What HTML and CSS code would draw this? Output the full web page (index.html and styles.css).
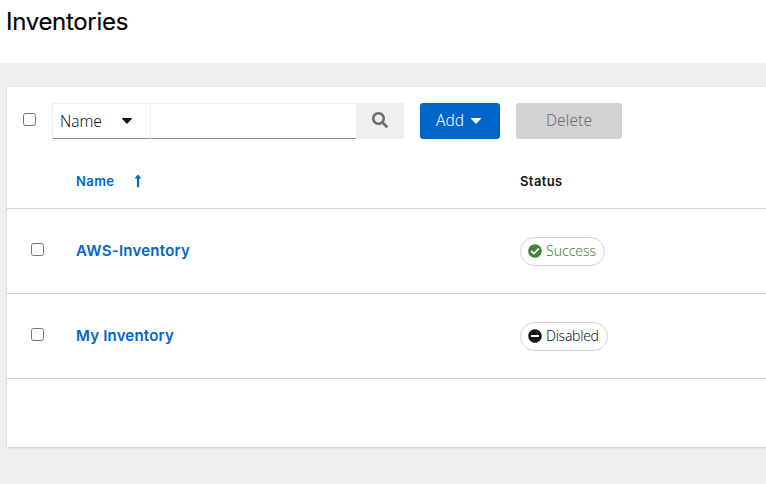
FILE: index.html
```
<!DOCTYPE html>
<html lang="en">
<head>
<meta charset="utf-8">
<title>Inventories</title>
<link rel="stylesheet" href="styles.css">
</head>
<body>
<header class="page-header"><h1>Inventories</h1></header>
<main class="card">
  <div class="toolbar">
    <input class="check" type="checkbox" aria-label="Select all">
    <div class="search">
      <button class="filter"><span class="filter-label">Name</span><svg class="caret" viewBox="0 0 10 6"><path d="M.7 0h8.6c.6 0 .9.7.5 1.1L5.5 5.5a.7.7 0 0 1-1 0L.2 1.1C-.2.7.1 0 .7 0z"/></svg></button>
      <input class="query" type="text" aria-label="Search">
      <button class="go" aria-label="Submit search"><svg viewBox="0 0 512 512"><path d="M505 442.7L405.300 343c-4.500-4.500-10.600-7-17-7H372c27.600-35.300 44-79.700 44-128C416 93.100 322.900 0 208 0S0 93.100 0 208s93.100 208 208 208c48.300 0 92.700-16.400 128-44v16.300c0 6.400 2.500 12.500 7 17l99.700 99.700c9.400 9.400 24.600 9.400 33.900 0l28.300-28.300c9.400-9.400 9.400-24.600.1-34zM208 336c-70.700 0-128-57.200-128-128 0-70.700 57.200-128 128-128 70.700 0 128 57.200 128 128 0 70.700-57.200 128-128 128z"/></svg></button>
    </div>
    <button class="btn add"><span class="add-label">Add</span><svg class="caret" viewBox="0 0 10 6"><path d="M.7 0h8.6c.6 0 .9.7.5 1.100L5.500 5.500a.7.7 0 0 1-1 0L.2 1.100C-.2.7.1 0 .7 0z"/></svg></button>
    <button class="btn delete" disabled><span class="delete-label">Delete</span></button>
  </div>
  <div class="row head">
    <span></span>
    <span class="sort"><span class="sort-label">Name</span><svg viewBox="0 0 256 512"><path d="M88 166.059V468c0 6.627 5.373 12 12 12h56c6.627 0 12-5.373 12-12V166.059h46.059c21.382 0 32.090-25.851 16.971-40.971l-86.059-86.059c-9.373-9.373-24.569-9.373-33.941 0l-86.059 86.059c-15.119 15.119-4.411 40.971 16.971 40.971H88z"/></svg></span>
    <span class="status-title">Status</span>
  </div>
  <div class="row">
    <input class="check" type="checkbox" aria-label="Select AWS-Inventory">
    <a class="name aws">AWS-Inventory</a>
    <span class="pill success"><svg viewBox="0 0 512 512"><path d="M504 256c0 136.967-111.033 248-248 248S8 392.967 8 256 119.033 8 256 8s248 111.033 248 248zM227.314 387.314l184-184c6.248-6.248 6.248-16.379 0-22.627l-22.627-22.627c-6.248-6.249-16.379-6.249-22.628 0L216 308.118l-70.059-70.059c-6.248-6.248-16.379-6.248-22.628 0l-22.627 22.627c-6.248 6.248-6.248 16.379 0 22.627l104 104c6.249 6.249 16.379 6.249 22.628.001z"/></svg><span>Success</span></span>
  </div>
  <div class="row">
    <input class="check" type="checkbox" aria-label="Select My Inventory">
    <a class="name mine">My Inventory</a>
    <span class="pill disabled"><svg viewBox="0 0 512 512"><path d="M256 8C119 8 8 119 8 256s111 248 248 248 248-111 248-248S393 8 256 8zM124 296c-6.600 0-12-5.400-12-12v-56c0-6.600 5.400-12 12-12h264c6.600 0 12 5.400 12 12v56c0 6.600-5.400 12-12 12H124z"/></svg><span>Disabled</span></span>
  </div>
</main>
</body>
</html>
```
FILE: styles.css
```
* { box-sizing: border-box; }
body { margin: 0; height: 484px; overflow: hidden; background: #efefef; color: #151515; font: 350 16px/24px "Noto Sans", sans-serif; }
svg { display: block; flex: none; fill: currentColor; }
button, input { font: inherit; color: inherit; border: 0; padding: 0; margin: 0; border-radius: 0; }
.page-header { height: 63px; padding: 6px 0 0 6px; background: #fff; }
h1 { margin: 0; font: 400 24px/32px Inter, sans-serif; letter-spacing: -.3px; color: #000; -webkit-text-stroke: .15px #000; }
.card { height: 360px; margin: 24px 0 0 7px; background: #fff; box-shadow: 0 1px 2px rgba(3,3,3,.13), 0 0 2px rgba(3,3,3,.09); }
.toolbar { display: flex; height: 68px; padding: 16px 0 0 16px; }
.check { width: 13px; height: 13px; flex: none; }
.toolbar .check { margin-top: 10px; }
.search { display: flex; width: 352px; height: 36px; margin-left: 16px; }
.filter { display: flex; align-items: center; width: 98px; background: #fff; border: 1px solid #efefef; border-right: 0; border-bottom-color: #8a8d90; padding-left: 7px; }
.filter-label { width: 43px; margin-right: 19px; padding-bottom: 1px; text-align: left; font-size: 15.5px; letter-spacing: -.1px; }
.caret { width: 10px; height: 6px; }
.query { width: 206px; background: #fff; border: 1px solid #efefef; border-right: 0; border-bottom-color: #8a8d90; }
.go { display: flex; align-items: center; justify-content: center; width: 48px; background: #efefef; color: #6a6e73; padding-bottom: 2px; }
.go svg { width: 16px; height: 16px; }
.btn { display: flex; align-items: center; height: 36px; margin-left: 16px; border-radius: 3px; font-size: 15.5px; }
.add { width: 80px; padding-left: 16px; background: #06c; color: #fff; }
.add-label { width: 29px; margin-right: 6px; padding-bottom: 2px; text-align: left; }
.delete { width: 106px; justify-content: center; background: #d2d2d2; color: #6a6e73; }
.delete-label { padding-bottom: 2px; letter-spacing: .1px; }
.row { display: grid; grid-template-columns: 45px 443px 1fr; align-items: center; height: 85px; padding-left: 24px; border-bottom: 1px solid #d2d2d2; }
.row .check { margin-bottom: 4px; }
.head { height: 54px; font: 600 13px/20px Inter, sans-serif; letter-spacing: .4px; }
.sort { display: flex; align-items: center; color: #06c; }
.sort-label { width: 38px; margin-right: 17px; padding-bottom: 2px; }
.status-title { padding: 0 0 2px 1px; }
.sort svg { width: 14px; height: 14px; margin-bottom: 1px; }
.name { color: #06c; font: 600 15px/24px Inter, sans-serif; letter-spacing: .25px; }
.mine { letter-spacing: .2px; }
.pill { display: flex; align-items: center; justify-self: start; height: 29px; padding-left: 7px; border: 1px solid #d2d2d2; border-radius: 15px; font-size: 14px; line-height: 21px; margin-left: 1px; }
.pill svg { width: 14px; height: 14px; margin-right: 4px; }
.pill span { padding-bottom: 1px; }
.success { width: 85px; color: #3e8635; }
.disabled { width: 88px; letter-spacing: -.3px; }
```
